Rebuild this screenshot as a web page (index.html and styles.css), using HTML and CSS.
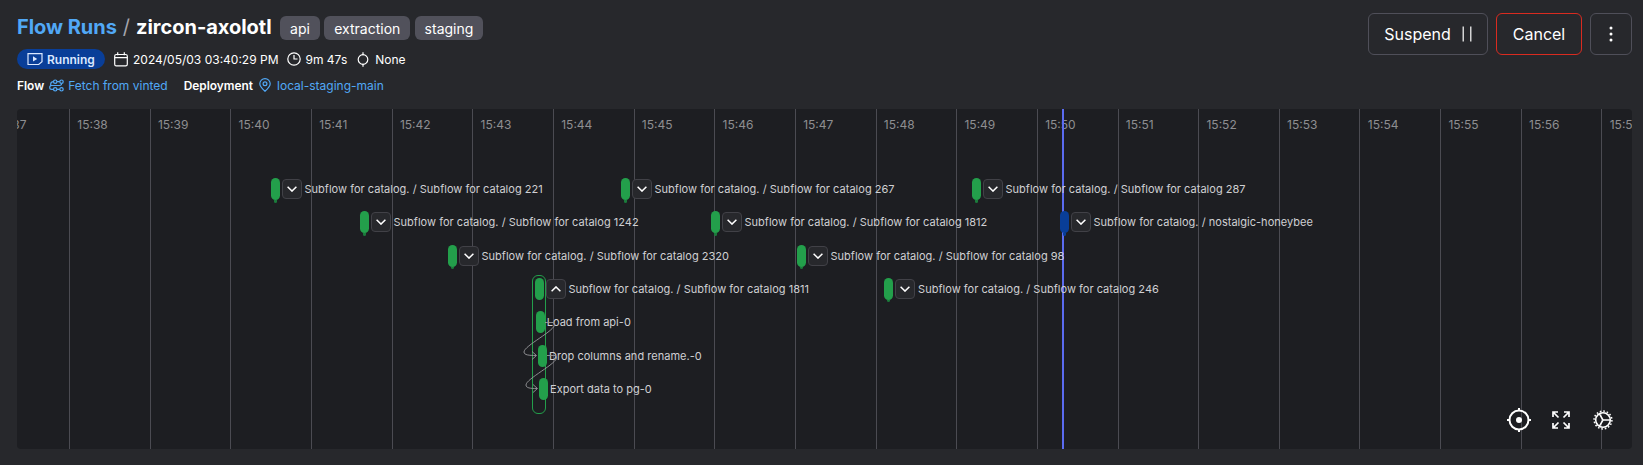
FILE: index.html
```
<!DOCTYPE html>
<html lang="en">
<head>
<meta charset="utf-8">
<title>Flow run</title>
<link rel="stylesheet" href="styles.css">
</head>
<body>
<header class="header">
  <div class="info">
    <div class="title-row">
      <h1 class="crumbs"><a class="link">Flow Runs</a><span class="slash">/</span><span>zircon-axolotl</span></h1>
      <div class="tags"><span class="tag">api</span><span class="tag">extraction</span><span class="tag">staging</span></div>
    </div>
    <div class="meta">
      <span class="state"><svg width="16" height="14" viewBox="0 0 16 14"><path d="M1 1.7h14v8l-3.3 2.8H1z"/><path class="solid" d="M6 4.2l4.2 2.7L6 9.6z"/></svg>Running</span>
      <span class="item date"><svg width="14" height="15" viewBox="0 0 14 15"><rect x=".7" y="2.5" width="12.6" height="11.3" rx="1.6"/><path d="M.7 5.6h12.6M3.7.3v3M10.3.3v3"/></svg>2024/05/03 03:40:29 PM</span>
      <span class="item time"><svg width="14" height="14" viewBox="0 0 14 14"><circle cx="7" cy="7" r="6.2"/><path d="M7 3v4h3.5"/></svg>9m 47s</span>
      <span class="item none"><svg width="14" height="15" viewBox="0 0 14 15"><circle cx="7" cy="7.5" r="4.8"/><path d="M7 .3v3M7 11.7v3"/></svg>None</span>
    </div>
    <div class="refs">
      <b>Flow</b>
      <a class="link ref"><svg width="15" height="13" viewBox="0 0 15 13"><circle cx="6.200" cy="2.700" r="1.700"/><circle cx="12.500" cy="2.700" r="1.700"/><circle cx="6.200" cy="10.300" r="1.700"/><circle cx="12.500" cy="10.300" r="1.700"/><path d="M7.900 2.700h2.900M7.900 10.300h2.900M12.500 4.400c0 1.400-.6 2.100-1.900 2.100H2.700C1.400 6.500.7 7.200.7 8.400s.8 1.900 2 1.900h1.800M4.500 2.700C2.700 2.700 1.700 3.600 1.700 5v1.500"/></svg>Fetch from vinted</a>
      <b class="dep">Deployment</b>
      <a class="link ref pin"><svg width="12" height="14" viewBox="0 0 12 14"><path d="M6 13.2C3.2 10.8.8 8.4.8 5.8a5.2 5.2 0 0 1 10.4 0c0 2.600-2.400 5-5.200 7.400z"/><circle cx="6" cy="5.800" r="1.900"/></svg>local-staging-main</a>
    </div>
  </div>
  <div class="actions">
    <button class="btn suspend">Suspend<svg width="10" height="16" viewBox="0 0 10 16"><path d="M1.200.500v15M8.800.500v15"/></svg></button>
    <button class="btn cancel">Cancel</button>
    <button class="btn more" aria-label="More"><svg width="4" height="16" viewBox="0 0 4 16"><circle cx="2" cy="2" r="1.500"/><circle cx="2" cy="8" r="1.500"/><circle cx="2" cy="14" r="1.500"/></svg></button>
  </div>
</header>
<main class="timeline" id="timeline">
  <div class="axis" id="axis"></div>
  <div class="now"></div>
  <div class="group"></div>
  <div id="nodes"></div>
  <svg class="edges" width="60" height="110" viewBox="500 300 60 110">
    <path d="M545 322.500h8C563 327 524 345 524 352c0 3 5 3.500 12 3.500M532 351.500l4.500 4-4.500 4"/>
    <path d="M547 355.500h8C565 360 526 378 526 385c0 3 4 3.500 11 3.500M533 384.500l4.500 4-4.500 4"/>
  </svg>
  <div class="controls">
    <svg width="24" height="24" viewBox="0 0 24 24"><circle cx="12" cy="12" r="9.500" stroke-width="2"/><circle class="solid" cx="12" cy="12" r="3"/><path stroke-width="2" d="M12 0v3M12 21v3M0 12h3M21 12h3"/></svg>
    <svg class="expand" width="18" height="18" viewBox="0 0 18 18"><path stroke-width="1.700" d="M1 6V1h5M1 1l5.500 5.500M12 1h5v5M17 1l-5.500 5.500M1 12v5h5M1 17l5.500-5.500M17 12v5h-5M17 17l-5.500-5.500"/></svg>
    <svg width="20" height="20" viewBox="0 0 20 20"><circle cx="10" cy="10" r="7.300" stroke-width="1.600"/><circle cx="10" cy="10" r="8.900" stroke-width="1.500" stroke-dasharray="1.600 1.895"/><path stroke-width="1.500" d="M10 10h7.300M10 10L6.300 3.700M10 10l-3.700 6.300"/></svg>
  </div>
</main>
<script src="timeline.js"></script>
</body>
</html>
```
FILE: styles.css
```
* { box-sizing: border-box; }
body { margin: 0; height: 465px; overflow: hidden; background: #27282c; color: #fff; font-family: Inter, "Liberation Sans", sans-serif; padding: 13px 11px 0 17px; }
svg { fill: none; stroke: currentColor; stroke-width: 1.2; flex: none; }
.solid { fill: currentColor; stroke: none; }
.header { display: flex; justify-content: space-between; height: 96px; }
.title-row { display: flex; align-items: center; gap: 8.5px; height: 28px; }
.crumbs { margin: 0; display: flex; gap: 6px; font-size: 20px; line-height: 28px; font-weight: 700; letter-spacing: -.03px; }
.link { color: #51a8f6; }
.slash { color: #a5a5ad; font-weight: 400; }
.tags { display: flex; gap: 4.3px; }
.tag { height: 24px; line-height: 25px; padding: 0 10px; border-radius: 6px; background: #51515b; font-size: 14px; margin-top: 1px; }
.meta { display: flex; align-items: center; height: 20px; margin-top: 8px; font-size: 12px; }
.state { display: flex; align-items: center; gap: 4px; width: 88px; height: 20px; padding-left: 10px; border-radius: 10px; background: #093e98; color: #dbe8ff; font-size: 12px; font-weight: 600; }
.item { display: flex; align-items: center; gap: 5px; }
.date { margin-left: 9px; }
.time { margin-left: 8px; }
.none { margin-left: 9px; }
.refs { display: flex; align-items: center; height: 18px; margin-top: 7px; font-size: 12px; }
.refs b { font-weight: 600; font-size: 11.9px; }
.refs .dep { margin-left: 16px; }
.ref { display: flex; align-items: center; gap: 4px; margin-left: 5px; }
.pin { margin-left: 6px; gap: 6px; }
.actions { display: flex; gap: 8px; }
.btn { display: flex; align-items: center; justify-content: center; height: 42px; border: 1px solid #4f4f59; border-radius: 6px; background: none; color: #fff; font: 16px Inter, sans-serif; padding: 0; }
.suspend { width: 120px; gap: 11px; }
.cancel { width: 86px; border-color: #d92b20; }
.more { width: 42px; }
.more svg { fill: currentColor; stroke: none; }
.timeline { position: relative; height: 340px; width: 1615px; border-radius: 4px; background: #1d1e22; overflow: hidden; }
.axis { display: flex; height: 100%; margin-left: -28.7px; }
.tick { flex: 0 0 80.67px; border-left: 1px solid #4b4b52; padding: 8px 0 0 7.3px; font-size: 12px; line-height: 16px; color: #8e8e91; white-space: nowrap; }
.now { position: absolute; left: 1045px; top: 0; width: 2px; height: 100%; background: #5b6bf0; }
.group { position: absolute; left: 515px; top: 166px; width: 14px; height: 139px; border: 1.5px solid #239f4b; border-radius: 6px; }
.node { position: absolute; display: flex; align-items: center; height: 22px; white-space: nowrap; color: #d0d0d3; font-size: 11px; }
.bar { position: relative; width: 9px; height: 22px; border-radius: 4.5px; background: #239f4b; }
.bar.parent::after { content: ""; position: absolute; left: 3px; top: 22px; width: 3px; height: 2.5px; border-radius: 0 0 2px 2px; background: #1b7a3b; }
.bar.running, .bar.running::after { background: #093e98; }
.toggle { display: flex; align-items: center; justify-content: center; width: 20px; height: 20px; margin-left: 2px; border: 1px solid #414147; border-radius: 4px; background: #27282c; color: #fff; }
.toggle svg { stroke-width: 1.5; }
.toggle.open svg { transform: rotate(180deg); }
.label { margin-left: 2.7px; letter-spacing: .02px; }
.leaf .label { margin-left: 2px; }
.edges { position: absolute; left: 483px; top: 191px; color: #99999c; stroke-width: .9; }
.controls { position: absolute; right: 19px; bottom: 17px; display: flex; align-items: center; gap: 22px; }
.expand { margin: 0 1px 0 -1px; }
```
FILE: timeline.js
```
const axis = document.getElementById('axis');
for (let m = 37; m <= 57; m++) {
  const t = document.createElement('div');
  t.className = 'tick';
  t.textContent = '15:' + m;
  axis.append(t);
}
const sub = 'Subflow for catalog. / ';
const nodes = [
  [253.8, 0, sub + 'Subflow for catalog 221'], [603.8, 0, sub + 'Subflow for catalog 267'], [954.8, 0, sub + 'Subflow for catalog 287'],
  [342.8, 1, sub + 'Subflow for catalog 1242'], [693.8, 1, sub + 'Subflow for catalog 1812'], [1042.8, 1, sub + 'nostalgic-honeybee', 'running'],
  [430.8, 2, sub + 'Subflow for catalog 2320'], [779.8, 2, sub + 'Subflow for catalog 98'],
  [517.7, 3, sub + 'Subflow for catalog 1811', 'open'], [867.4, 3, sub + 'Subflow for catalog 246'],
  [518.7, 4, 'Load from api-0', 'leaf'], [521, 5, 'Drop columns and rename.-0', 'leaf'], [522, 6, 'Export data to pg-0', 'leaf']
];
const chevron = '<svg width="10" height="6" viewBox="0 0 10 6"><path d="M.6.8 5 5.1 9.400.8"/></svg>';
document.getElementById('nodes').innerHTML = nodes.map(([x, row, text, kind = '']) => {
  const leaf = kind === 'leaf';
  const bar = `<span class="bar ${leaf || kind === 'open' ? '' : 'parent'} ${kind}"></span>`;
  const toggle = leaf ? '' : `<span class="toggle ${kind}">${chevron}</span>`;
  return `<div class="node ${kind}" style="left:${x}px;top:${69 + row * 33.3}px">${bar}${toggle}<span class="label">${text}</span></div>`;
}).join('');
```
